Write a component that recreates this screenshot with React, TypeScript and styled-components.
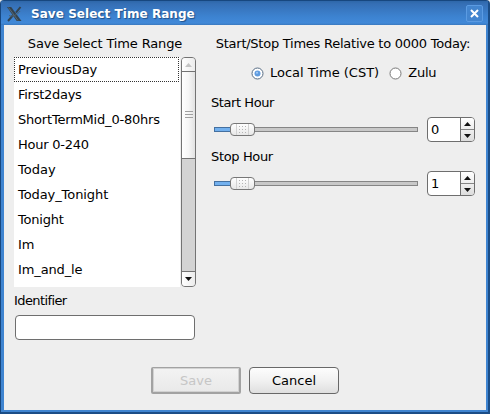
import React, { useState } from "react";
import styled, { createGlobalStyle } from "styled-components";

const GlobalStyle = createGlobalStyle`
  * { box-sizing: border-box; }
  body { margin: 0; background: #eeeeee; overflow: hidden; }
  button, input { font: inherit; }
`;

const Dialog = styled.main`
  width: 490px;
  height: 414px;
  display: flex;
  flex-direction: column;
  background: #eeeeee;
  border: solid;
  border-width: 1px 2px 2px 1px;
  border-color: #17477f #1b4d86 #1b4d86 #17477f;
  border-radius: 4px 4px 0 0;
  font: 13px/16px "DejaVu Sans", sans-serif;
  color: #000;
`;

const TitleBar = styled.header`
  height: 24px;
  flex: none;
  display: flex;
  align-items: center;
  padding: 1px 5px 0 6px;
  background: linear-gradient(#2e67a9 0, #356fb5 3px, #3d83d1 16px, #4189d8 22px, #3a78be 24px);
  color: #fff;
`;

const Title = styled.h1`
  flex: 1;
  margin: 0 0 0 9px;
  font-size: 12px;
  line-height: 16px;
  font-weight: bold;
  letter-spacing: 0.05px;
  white-space: nowrap;
  text-shadow: 1px 1px 1px #1f4f88;
`;

const CloseButton = styled.button`
  width: 17px;
  height: 17px;
  padding: 0;
  display: grid;
  place-items: center;
  border: 1px solid #5b9be2;
  border-radius: 2px;
  background: #4385cf;
`;

const Frame = styled.div`
  flex: 1;
  display: flex;
  flex-direction: column;
  border: solid #3f84d0;
  border-width: 0 2px 2px 3px;
  padding: 10px 11px 0 10px;
`;

const Columns = styled.div`
  display: flex;
  gap: 15px;
  height: 305px;
`;

const LeftColumn = styled.section`
  width: 182px;
  display: flex;
  flex-direction: column;
`;

const RightColumn = styled.section`
  width: 265px;
  display: flex;
  flex-direction: column;
`;

const Heading = styled.div<{ $spacing: number }>`
  height: 18px;
  line-height: 18px;
  text-align: center;
  white-space: nowrap;
  letter-spacing: ${(p) => p.$spacing}px;
`;

const ListArea = styled.div`
  margin-top: 4px;
  height: 230px;
  display: flex;
  gap: 1px;
`;

const List = styled.ul`
  width: 166px;
  margin: 0;
  padding: 0;
  list-style: none;
  background: #fff;
`;

const Item = styled.li<{ $focused: boolean; $spacing: number }>`
  width: 165px;
  height: 25px;
  padding-left: 3px;
  line-height: 23px;
  white-space: nowrap;
  letter-spacing: ${(p) => p.$spacing}px;
  border: 1px dotted ${(p) => (p.$focused ? "#333" : "transparent")};
`;

const ScrollBar = styled.div`
  width: 15px;
  display: flex;
  flex-direction: column;
  border: 1px solid #737373;
  border-radius: 4px;
  background: #d3d3d3;
  overflow: hidden;
`;

const ScrollCap = styled.div`
  height: 14px;
  flex: none;
  display: grid;
  place-items: center;
  background: linear-gradient(90deg, #fff, #ececec);
`;

const Thumb = styled.div`
  height: 88px;
  margin-top: -1px;
  display: grid;
  place-items: center;
  border: solid #737373;
  border-width: 1px 0;
  background: linear-gradient(90deg, #fff, #f6f6f6 50%, #e2e2e2);
`;

const Spacer = styled.div`
  flex: 1;
  border-bottom: 1px solid #737373;
`;

const FieldLabel = styled.label<{ $top: number; $spacing: number }>`
  height: 16px;
  margin-top: ${(p) => p.$top}px;
  letter-spacing: ${(p) => p.$spacing}px;
  white-space: nowrap;
`;

const TextField = styled.input`
  width: 180px;
  height: 25px;
  flex: none;
  margin: 6px 0 0 1px;
  padding: 0 5px;
  border: 1px solid #6e6e6e;
  border-radius: 4px;
  background: #fff;
  outline: none;
`;

const RadioRow = styled.div`
  height: 18px;
  margin: 11px 0 0 40px;
  display: flex;
  gap: 10px;
`;

const RadioOption = styled.button<{ $spacing: number }>`
  display: flex;
  align-items: center;
  gap: 6px;
  padding: 0;
  border: 0;
  background: none;
  color: #000;
  white-space: nowrap;
  letter-spacing: ${(p) => p.$spacing}px;
`;

const HourRow = styled.div`
  height: 25px;
  margin-top: 6px;
  padding-left: 3px;
  display: flex;
  align-items: center;
  gap: 9px;
`;

const Track = styled.div`
  width: 204px;
  height: 5px;
  display: flex;
  align-items: center;
  border: 1px solid #858585;
  background: #c8c8c8;
`;

const TrackFill = styled.div`
  width: 16px;
  height: 5px;
  margin-left: -1px;
  border: 1px solid #4470a0;
  border-right: 0;
  background: #72b0ee;
`;

const Handle = styled.div`
  width: 25px;
  height: 13px;
  flex: none;
  display: grid;
  place-items: center;
  border: 1px solid #777;
  border-radius: 4px;
  background: linear-gradient(#fff, #e8e8e8);
`;

const Spinner = styled.div`
  width: 48px;
  height: 25px;
  display: flex;
  border: 1px solid #6e6e6e;
  border-radius: 4px;
  background: #fff;
  overflow: hidden;
`;

const SpinValue = styled.div`
  flex: 1;
  padding-left: 3px;
  line-height: 23px;
`;

const SpinButtons = styled.div`
  width: 14px;
  display: grid;
  grid-template-rows: 12px 11px;
  border-left: 1px solid #6e6e6e;
`;

const SpinButton = styled.button<{ $upper?: boolean }>`
  padding: 0;
  display: grid;
  place-items: center;
  border: 0;
  border-bottom: ${(p) => (p.$upper ? "1px solid #858585" : "0")};
  background: ${(p) => (p.$upper ? "linear-gradient(#fff, #eee)" : "linear-gradient(#eee, #ddd)")};
`;

const Actions = styled.footer`
  display: flex;
  gap: 8px;
  margin: 27px 0 0 137px;
`;

const ActionButton = styled.button`
  width: 90px;
  height: 27px;
  padding: 0;
  border: 1px solid #686868;
  border-radius: 4px;
  background: linear-gradient(#fdfdfd, #f1f1f1 50%, #dfdfdf);
  color: #000;

  &:disabled {
    padding-top: 1px;
    border: solid #a2a2a2;
    border-width: 1px 2px 2px;
    border-radius: 2px;
    box-shadow: inset 0 0 0 1px #d2d2d2;
    background: linear-gradient(#f3f3f3, #e9e9e9);
    color: #c6c6c6;
  }
`;

const ranges: [string, number][] = [
  ["PreviousDay", -0.14], ["First2days", -0.27], ["ShortTermMid_0-80hrs", -0.2],
  ["Hour 0-240", -0.25], ["Today", 0], ["Today_Tonight", -0.08], ["Tonight", -0.2],
  ["Im", 0], ["Im_and_le", -0.12],
];

function Arrow({ down = false, color = "#111" }: { down?: boolean; color?: string }) {
  return (
    <svg width="7" height="4" viewBox="0 0 7 4">
      <path d={down ? "M0 0h7L3.5 4z" : "M0 4h7L3.5 0z"} fill={color} />
    </svg>
  );
}

function AppMark() {
  return (
    <svg width="15" height="16" viewBox="0 0 15 16">
      <path d="M0 1h4.2L14.5 15h-4.8z" fill="#34434f" />
      <path d="M13.5 1 9 6.7M5.8 9.5 1 15" stroke="#34434f" strokeWidth="2" />
      <path d="M1.5 1.5 11 14.5" stroke="#60737f" strokeWidth=".8" />
      <path d="M2 9.5c2.5 1.8 9-.8 11-4.5" stroke="#4f626f" fill="none" />
    </svg>
  );
}

function RadioMark({ checked }: { checked: boolean }) {
  return (
    <svg width="13" height="13" viewBox="0 0 13 13">
      <circle cx="6.5" cy="6.5" r="5.5" fill="#fff" stroke={checked ? "#566b83" : "#777"} />
      {checked && <circle cx="6.5" cy="6.5" r="3" fill="#609ce0" />}
      {checked && <circle cx="6" cy="5.8" r="1" fill="#a6cdf7" />}
    </svg>
  );
}

function HandleGrip() {
  return (
    <svg width="13" height="11" viewBox="0 0 13 11">
      <path d="M.5 0v11M12.5 0v11" stroke="#d2d2d2" />
      <path d="M3 2.5h8M3 5.5h8M3 8.5h8" stroke="#b5b5b5" strokeDasharray="1 2" />
    </svg>
  );
}

function HourControl({ initial }: { initial: number }) {
  const [value, setValue] = useState(initial);
  return (
    <HourRow>
      <Track><TrackFill /><Handle><HandleGrip /></Handle></Track>
      <Spinner>
        <SpinValue>{value}</SpinValue>
        <SpinButtons>
          <SpinButton $upper aria-label="Increase" onClick={() => setValue(value + 1)}><Arrow /></SpinButton>
          <SpinButton aria-label="Decrease" onClick={() => setValue(Math.max(0, value - 1))}><Arrow down /></SpinButton>
        </SpinButtons>
      </Spinner>
    </HourRow>
  );
}

export default function App() {
  const [selected, setSelected] = useState(0);
  const [zulu, setZulu] = useState(false);
  return (
    <>
      <GlobalStyle />
      <Dialog>
        <TitleBar>
          <AppMark />
          <Title>Save Select Time Range</Title>
          <CloseButton aria-label="Close">
            <svg width="9" height="9" viewBox="0 0 9 9"><path d="m1 1 7 7M8 1 1 8" stroke="#fff" strokeWidth="2" /></svg>
          </CloseButton>
        </TitleBar>
        <Frame>
          <Columns>
            <LeftColumn>
              <Heading $spacing={-0.14}>Save Select Time Range</Heading>
              <ListArea>
                <List>
                  {ranges.map(([name, spacing], i) => (
                    <Item key={name} $focused={i === selected} $spacing={spacing} onClick={() => setSelected(i)}>{name}</Item>
                  ))}
                </List>
                <ScrollBar>
                  <ScrollCap><Arrow color="#c4c4c4" /></ScrollCap>
                  <Thumb>
                    <svg width="8" height="8" viewBox="0 0 8 8"><path d="M0 .5h8M0 3.5h8M0 6.5h8" stroke="#a0a0a0" /></svg>
                  </Thumb>
                  <Spacer />
                  <ScrollCap><Arrow down /></ScrollCap>
                </ScrollBar>
              </ListArea>
              <FieldLabel $top={6} $spacing={-0.6} htmlFor="identifier">Identifier</FieldLabel>
              <TextField id="identifier" />
            </LeftColumn>
            <RightColumn>
              <Heading $spacing={-0.25}>Start/Stop Times Relative to 0000 Today:</Heading>
              <RadioRow>
                <RadioOption $spacing={0} onClick={() => setZulu(false)}><RadioMark checked={!zulu} />Local Time (CST)</RadioOption>
                <RadioOption $spacing={-0.2} onClick={() => setZulu(true)}><RadioMark checked={zulu} />Zulu</RadioOption>
              </RadioRow>
              <FieldLabel $top={13} $spacing={-0.42}>Start Hour</FieldLabel>
              <HourControl initial={0} />
              <FieldLabel $top={7} $spacing={-0.36}>Stop Hour</FieldLabel>
              <HourControl initial={1} />
            </RightColumn>
          </Columns>
          <Actions>
            <ActionButton disabled>Save</ActionButton>
            <ActionButton>Cancel</ActionButton>
          </Actions>
        </Frame>
      </Dialog>
    </>
  );
}
